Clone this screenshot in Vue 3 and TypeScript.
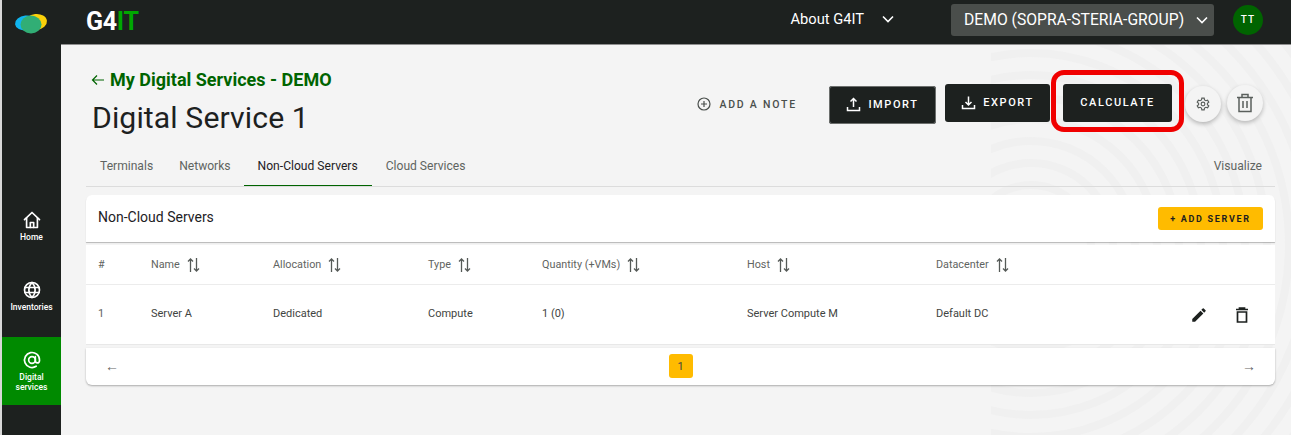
<template>
  <div class="shell">
    <aside class="sidebar">
      <div class="logo">
        <svg width="34" height="24" viewBox="0 0 34 24">
          <ellipse cx="22" cy="10" rx="11" ry="8" fill="#fbd10a" transform="rotate(-6 22 10)" />
          <ellipse cx="12" cy="11" rx="11" ry="7.5" fill="#10b4ee" transform="rotate(-6 12 11)" />
          <ellipse cx="17" cy="12.5" rx="10.5" ry="9" fill="#31ae75" />
        </svg>
      </div>
      <nav class="side-nav">
        <div v-for="item in navItems" :key="item.label" class="nav-item" :class="{ active: item.active }">
          <svg width="20" height="20" viewBox="0 0 24 24" fill="none" stroke="#fff" stroke-width="2" stroke-linecap="round" stroke-linejoin="round">
            <path v-for="(d, i) in item.paths" :key="i" :d="d" />
          </svg>
          <span>{{ item.label }}</span>
        </div>
      </nav>
    </aside>

    <div class="right">
      <header class="topbar">
        <div class="brand">G4<span>IT</span></div>
        <div class="about">
          About G4IT
          <svg class="chev" width="12" height="8" viewBox="0 0 12 8"><path d="M1 1.5 6 6.5 11 1.5" /></svg>
        </div>
        <div class="org">
          DEMO (SOPRA-STERIA-GROUP)
          <svg class="chev" width="12" height="8" viewBox="0 0 12 8"><path d="M1 1.5 6 6.5 11 1.5" /></svg>
        </div>
        <div class="avatar">TT</div>
      </header>

      <main class="main">
        <svg class="swirl" width="300" height="390" viewBox="0 0 300 390" fill="none" stroke="#f0f0f0" stroke-width="8">
          <circle v-for="r in swirlRadii" :key="r" cx="40" cy="200" :r="r" />
        </svg>

        <div class="head-row">
          <div class="titles">
            <div class="crumb">
              <svg width="14" height="12" viewBox="0 0 14 12" fill="none" stroke="#006400" stroke-width="1.2">
                <path d="M13 6H1.5M6 1.5 1.5 6 6 10.5" />
              </svg>
              My Digital Services - DEMO
            </div>
            <h1>Digital Service 1</h1>
          </div>
          <div class="actions">
            <div class="note">
              <svg width="14" height="14" viewBox="0 0 14 14" fill="none" stroke="#4a4f4c" stroke-width="1.2">
                <circle cx="7" cy="7" r="6" />
                <path d="M7 4v6M4 7h6" />
              </svg>
              ADD A NOTE
            </div>
            <button class="dark import">
              <svg width="15" height="15" viewBox="0 0 15 15" fill="none" stroke="#fff" stroke-width="1.5">
                <path d="M7.5 10V2M4.5 4.5l3-3 3 3M1.5 10v3.5h12V10" />
              </svg>
              IMPORT
            </button>
            <button class="dark export">
              <svg width="15" height="15" viewBox="0 0 15 15" fill="none" stroke="#fff" stroke-width="1.5">
                <path d="M7.5 1.5V10M4.5 7l3 3 3-3M1.5 10v3.5h12V10" />
              </svg>
              EXPORT
            </button>
            <div class="calc-wrap">
              <button class="dark calc">CALCULATE</button>
            </div>
            <button class="round gear">
              <svg width="14" height="14" viewBox="0 0 24 24" fill="none" stroke="#5a5f5c" stroke-width="2">
                <circle cx="12" cy="12" r="3.2" />
                <path d="M10 2h4l.6 3 2.4 1.4 2.9-1 2 3.4-2.3 2v2.4l2.3 2-2 3.4-2.9-1-2.4 1.4-.6 3h-4l-.6-3L7 17.6l-2.9 1-2-3.4 2.3-2v-2.4l-2.3-2 2-3.4 2.9 1L9.400 5z" />
              </svg>
            </button>
            <button class="round bin">
              <svg width="18" height="20" viewBox="0 0 18 20" fill="none" stroke="#5a5f5c" stroke-width="1.5">
                <path d="M1 4.500h16M6 4.500V1.500h6v3M3 4.500V18.500h12V4.500M7 8v7M11 8v7" />
              </svg>
            </button>
          </div>
        </div>

        <div class="tabs">
          <div v-for="t in tabs" :key="t" class="tab" :class="{ selected: t === 'Non-Cloud Servers' }">{{ t }}</div>
          <div class="tab visualize">Visualize</div>
        </div>

        <section class="card-head">
          <span>Non-Cloud Servers</span>
          <button class="add">+ ADD SERVER</button>
        </section>

        <section class="table">
          <div class="cols thead">
            <div v-for="c in columns" :key="c" class="th">
              {{ c }}
              <svg v-if="c !== '#'" width="13" height="14" viewBox="0 0 13 14" fill="none" stroke="#555a57" stroke-width="1.3">
                <path d="M3.500 14V1M1 3.500 3.500 1 6 3.500M9.500 0v13M7 10.500 9.500 13 12 10.500" />
              </svg>
            </div>
            <div></div>
          </div>
          <div class="cols tbody">
            <div v-for="(v, i) in row" :key="i" class="td" :class="{ index: i === 0 }">{{ v }}</div>
            <div class="row-icons">
              <svg width="18" height="18" viewBox="0 0 24 24" fill="#1d211f">
                <path d="M3 17.250V21h3.750L17.810 9.940l-3.750-3.750L3 17.250zM20.710 7.040a1 1 0 0 0 0-1.410l-2.340-2.340a1 1 0 0 0-1.410 0l-1.830 1.830 3.750 3.750 1.830-1.830z" />
              </svg>
              <svg width="14" height="16" viewBox="0 0 14 16" fill="none" stroke="#1d211f" stroke-width="1.700">
                <path d="M1 2.500h12M4.500 2.500V1h5v1.500M2.500 5h9v10h-9z" />
              </svg>
            </div>
          </div>
        </section>

        <section class="pager">
          <span class="arrow">←</span>
          <span class="page">1</span>
          <span class="arrow">→</span>
        </section>
      </main>
    </div>
  </div>
</template>

<script setup lang="ts">
const navItems = [
  {
    label: 'Home',
    active: false,
    paths: ['M3 11.500 12 3l9 8.500', 'M5.500 9.500V21h13V9.500', 'M10 21v-6h4v6']
  },
  {
    label: 'Inventories',
    active: false,
    paths: ['M12 3a9 9 0 1 0 0 18 9 9 0 0 0 0-18z', 'M3.500 9h17M3.500 15h17', 'M12 3c-5 5-5 13 0 18M12 3c5 5 5 13 0 18']
  },
  {
    label: 'Digital services',
    active: true,
    paths: ['M12 8a4 4 0 1 0 0 8 4 4 0 0 0 0-8z', 'M16 8v5a2.500 2.500 0 0 0 5 0v-1a9 9 0 1 0-4 7.500']
  }
]

const tabs = ['Terminals', 'Networks', 'Non-Cloud Servers', 'Cloud Services']
const columns = ['#', 'Name', 'Allocation', 'Type', 'Quantity (+VMs)', 'Host', 'Datacenter']
const row = ['1', 'Server A', 'Dedicated', 'Compute', '1 (0)', 'Server Compute M', 'Default DC']
const swirlRadii = [60, 82, 104, 126, 148, 170, 192, 214, 236, 258, 280, 302, 324]
</script>

<style>
html,
body {
  margin: 0;
  background: #f4f4f4;
  overflow: hidden;
}
</style>

<style scoped>
.shell {
  display: flex;
  width: 1291px;
  height: 435px;
  overflow: hidden;
  font-family: Roboto, 'Liberation Sans', sans-serif;
  color: #1d211f;
  border-left: 2px solid #d8d8d8;
  box-sizing: border-box;
}

.sidebar {
  width: 59px;
  flex-shrink: 0;
  background: #1d211f;
  display: flex;
  flex-direction: column;
}

.logo {
  height: 45px;
  display: flex;
  align-items: center;
  justify-content: center;
  padding: 3px 1px 0 0;
  box-sizing: border-box;
}

.side-nav {
  margin-top: 152px;
  display: flex;
  flex-direction: column;
}

.nav-item {
  height: 70px;
  box-sizing: border-box;
  padding-top: 13px;
  display: flex;
  flex-direction: column;
  align-items: center;
  gap: 2px;
  color: #fff;
  font-size: 8.5px;
  font-weight: 500;
  line-height: 10px;
  text-align: center;
}

.nav-item span {
  max-width: 46px;
}

.nav-item.active {
  background: #008a00;
  height: 68px;
}

.right {
  flex: 1;
  min-width: 0;
  display: flex;
  flex-direction: column;
}

.topbar {
  height: 45px;
  flex-shrink: 0;
  background: #1d211f;
  display: flex;
  align-items: center;
  color: #fff;
  border-bottom: 1px solid #8f8f8f;
  box-sizing: border-box;
}

.brand {
  margin-left: 25px;
  margin-top: -2px;
  font-size: 25px;
  font-weight: 700;
  letter-spacing: -0.3px;
}

.brand span {
  color: #00a800;
}

.about {
  margin-left: auto;
  margin-top: -7px;
  display: flex;
  align-items: center;
  gap: 18px;
  font-size: 14.7px;
  font-weight: 400;
}

.chev {
  fill: none;
  stroke: #fff;
  stroke-width: 1.6;
}

.org {
  margin-left: 57px;
  width: 263px;
  height: 32px;
  margin-top: -5px;
  box-sizing: border-box;
  padding-left: 13px;
  background: #4a4e4b;
  border-radius: 3px;
  display: flex;
  align-items: center;
  gap: 12px;
  font-size: 15.7px;
  white-space: nowrap;
}

.avatar {
  margin: -5px 28px 0 19px;
  width: 30px;
  height: 30px;
  border-radius: 50%;
  background: #006400;
  display: flex;
  align-items: center;
  justify-content: center;
  font-size: 10px;
  font-weight: 500;
  letter-spacing: 1px;
}

.main {
  position: relative;
  flex: 1;
  padding: 0 16px 0 25px;
  background: #f4f4f4;
  overflow: hidden;
}

.swirl {
  position: absolute;
  right: 0;
  top: 0;
}

.head-row,
.tabs,
.card-head,
.table,
.pager {
  position: relative;
}

.head-row {
  height: 105px;
  display: flex;
  justify-content: space-between;
}

.titles {
  padding: 24px 0 0 5px;
}

.crumb {
  display: flex;
  align-items: center;
  gap: 5px;
  color: #006400;
  font-size: 18px;
  font-weight: 700;
  line-height: 22px;
}

h1 {
  margin: 9px 0 0 1px;
  font-size: 30.2px;
  font-weight: 400;
  line-height: 36px;
  letter-spacing: 0.1px;
}

.actions {
  display: flex;
  align-items: flex-start;
  padding: 39px 12px 0 0;
}

.note {
  display: flex;
  align-items: center;
  gap: 8px;
  margin: 13px 32px 0 0;
  color: #4a4f4c;
  font-size: 10.5px;
  font-weight: 500;
  letter-spacing: 1.8px;
  white-space: nowrap;
}

button {
  font-family: inherit;
  border: none;
  padding: 0;
}

.dark {
  height: 38px;
  padding-bottom: 2px;
  background: #1d211f;
  color: #fff;
  border-radius: 3px;
  display: flex;
  align-items: center;
  justify-content: center;
  gap: 7px;
  font-size: 11px;
  font-weight: 500;
  letter-spacing: 1.6px;
}

.import {
  width: 107px;
  margin-top: 2px;
  box-shadow: 0 0 0 1px #6c6f6d inset;
}

.export {
  width: 105px;
  margin-left: 9px;
}

.calc-wrap {
  position: relative;
  margin-left: 13px;
}

.calc-wrap::after {
  content: '';
  position: absolute;
  left: -12px;
  right: -12px;
  top: -14px;
  bottom: -10px;
  border: 5px solid #f00000;
  border-radius: 13px;
}

.calc {
  width: 109px;
}

.round {
  width: 36px;
  height: 36px;
  border-radius: 50%;
  background: #f4f4f4;
  box-shadow: 0 2px 4px rgba(0, 0, 0, 0.25);
  display: flex;
  align-items: center;
  justify-content: center;
  margin-top: 2px;
}

.gear {
  margin-left: 13px;
}

.bin {
  margin-left: 6px;
  margin-top: 1px;
}

.tabs {
  height: 36px;
  display: flex;
  border-bottom: 1px solid #dcdcdc;
  box-sizing: content-box;
}

.tab {
  padding: 0 14px;
  line-height: 32px;
  font-size: 12.1px;
  color: #5f6461;
  white-space: nowrap;
}

.tab:nth-child(-n + 2) {
  padding: 0 13px;
}

.tab:first-child {
  padding-left: 14px;
}

.tab.selected {
  color: #1d211f;
  border-bottom: 1.5px solid #006400;
  height: 35px;
  box-sizing: border-box;
  margin-top: 1px;
  line-height: 30px;
}

.visualize {
  margin-left: auto;
  padding: 0 13px 0 0;
}

.card-head {
  margin-top: 8px;
  height: 47px;
  background: #fff;
  border-radius: 6px 6px 0 0;
  box-shadow: 0 1px 1px rgba(0, 0, 0, 0.25);
  display: flex;
  align-items: center;
  justify-content: space-between;
  padding: 0 12px;
  font-size: 14px;
}

.card-head span {
  margin-top: -4px;
}

.add {
  width: 105px;
  height: 23px;
  background: #ffbb00;
  border-radius: 3px;
  font-size: 9px;
  font-weight: 700;
  letter-spacing: 1.7px;
  color: #1d211f;
  white-space: nowrap;
}

.table {
  margin-top: 3px;
  background: #fff;
}

.cols {
  display: grid;
  grid-template-columns: 53px 122px 155px 114px 205px 189px 254px 1fr;
  padding-left: 12px;
  align-items: center;
}

.thead {
  height: 39px;
  border-bottom: 1px solid #ececec;
}

.tbody {
  height: 60px;
  box-sizing: border-box;
  border-bottom: 1px solid #e8e8e8;
}

.th {
  display: flex;
  align-items: center;
  gap: 7px;
  font-size: 10.8px;
  color: #5f6461;
  white-space: nowrap;
}

.td {
  font-size: 11px;
  color: #3f4441;
  white-space: nowrap;
  margin-top: -2px;
}

.td.index {
  color: #5f6461;
}

.row-icons {
  display: flex;
  align-items: center;
  gap: 27px;
}

.pager {
  margin-top: 3px;
  height: 37px;
  background: #fff;
  border-radius: 0 0 6px 6px;
  box-shadow: 0 1px 2px rgba(0, 0, 0, 0.3);
  display: flex;
  align-items: center;
  justify-content: space-between;
  padding: 0 19px;
}

.arrow {
  font-size: 14px;
  color: #666;
  margin-top: -2px;
}

.page {
  width: 24px;
  height: 24px;
  margin-top: -1px;
  background: #ffbb00;
  border-radius: 3px;
  display: flex;
  align-items: center;
  justify-content: center;
  font-size: 11px;
  color: #3f4441;
}
</style>
